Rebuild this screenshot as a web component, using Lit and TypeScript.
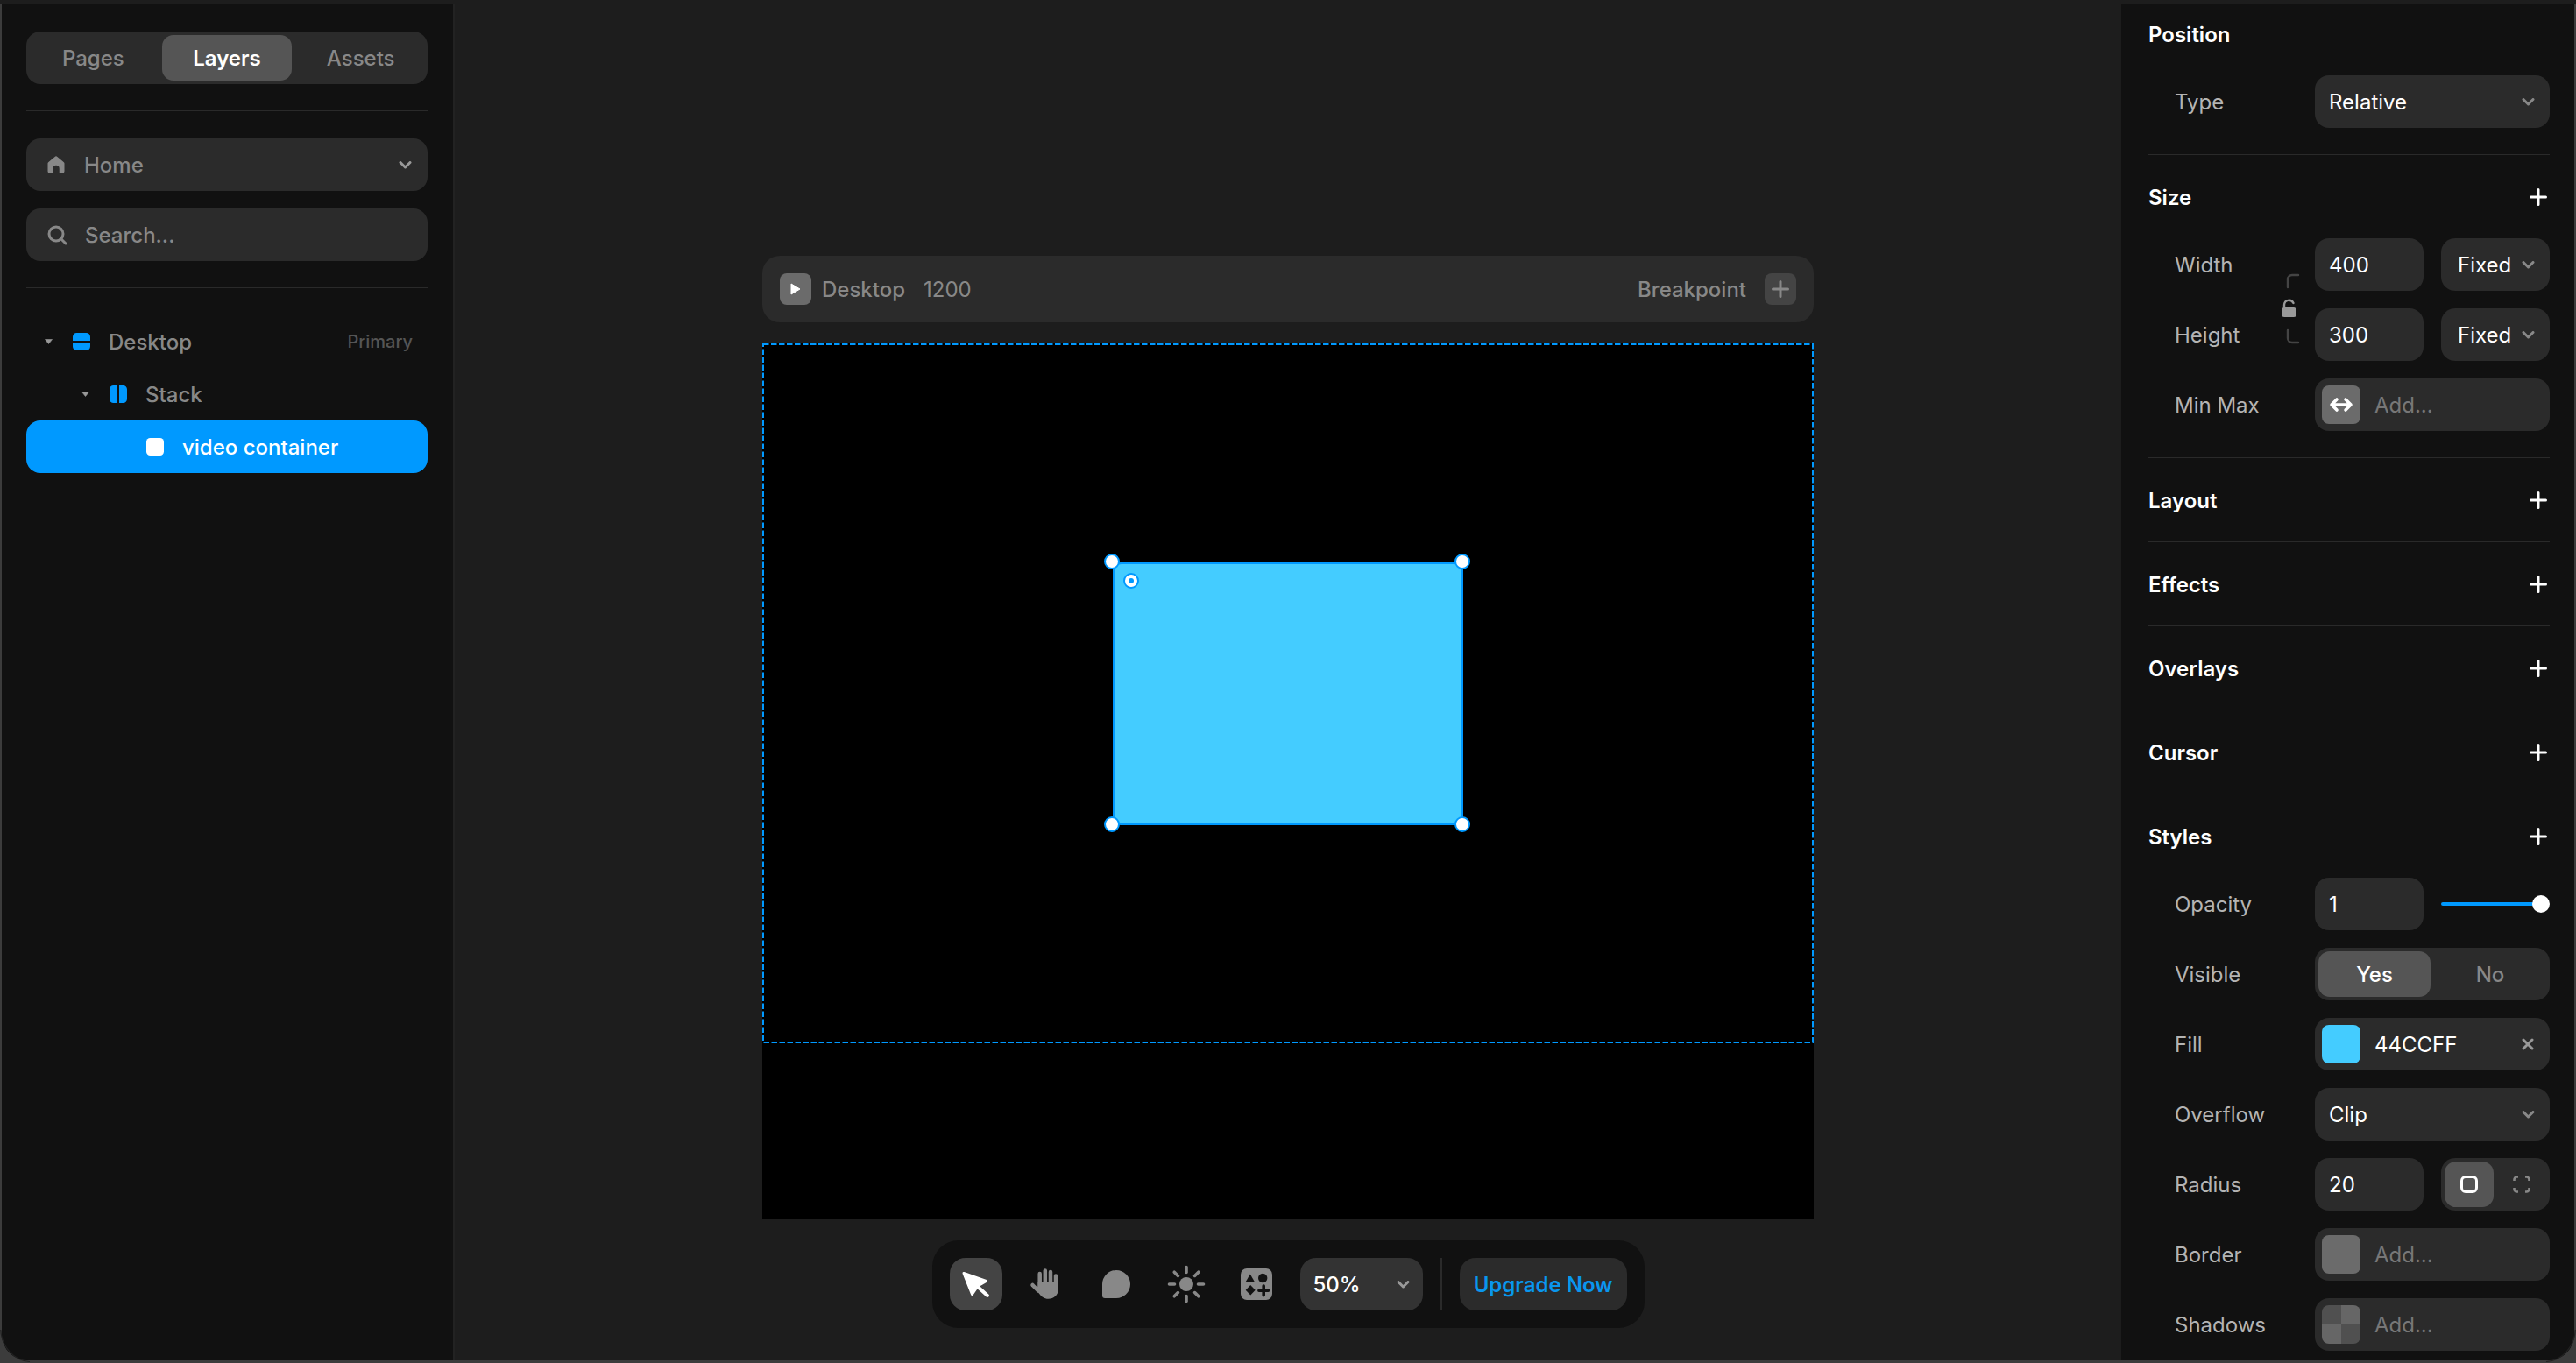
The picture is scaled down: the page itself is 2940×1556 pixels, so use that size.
import { LitElement, html, css, svg } from 'lit';
import { customElement } from 'lit/decorators.js';

const chevron = html`<svg class="chev" width="15" height="9" viewBox="0 0 15 9"><path d="M2 1.5 7.5 7 13 1.5" fill="none" stroke="currentColor" stroke-width="3" stroke-linecap="round" stroke-linejoin="round"/></svg>`;

const plus = html`<svg class="plus" width="20" height="20" viewBox="0 0 20 20"><path d="M10 1.5v17M1.5 10h17" stroke="currentColor" stroke-width="3" stroke-linecap="round"/></svg>`;

const caret = html`<svg class="caret" width="9" height="6" viewBox="0 0 9 6"><path d="M.5.5h8L4.5 5.5z" fill="#999" stroke="#999" stroke-width=".6" stroke-linejoin="round"/></svg>`;

const sunRays = [0, 45, 90, 135, 180, 225, 270, 315].map(
  (a) => svg`<line x1="30" y1="10.5" x2="30" y2="16.5" transform="rotate(${a} 30 30)"/>`
);

@customElement('left-panel')
class LeftPanel extends LitElement {
  static styles = css`
    :host {
      display: flex;
      flex-direction: column;
      flex: none;
      box-sizing: border-box;
      width: 517px;
      padding: 31px 29px 0 28px;
      border-right: 2px solid #222;
      background: #111;
    }
    .tabs {
      display: grid;
      grid-template-columns: repeat(3, 1fr);
      height: 60px;
      box-sizing: border-box;
      padding: 4px 0;
      border-radius: 16px;
      background: #2b2b2b;
      margin-bottom: 30px;
    }
    .tab {
      display: flex;
      align-items: center;
      justify-content: center;
      border-radius: 13px;
      color: #888;
      font-weight: 500;
    }
    .tab.on {
      margin: 0 2.500px;
      background: #555;
      color: #fff;
      font-weight: 600;
    }
    .line {
      height: 1px;
      background: #2a2a2a;
    }
    .field {
      display: flex;
      align-items: center;
      height: 60px;
      padding: 0 18px 0 24px;
      border-radius: 16px;
      background: #2b2b2b;
      color: #888;
      font-weight: 500;
      margin-top: 20px;
    }
    .field.home {
      margin-top: 31px;
    }
    .field svg:first-child {
      margin-right: 22px;
      flex: none;
    }
    .field .chev {
      margin-left: auto;
      color: #999;
    }
    .search {
      margin-bottom: 30px;
    }
    .tree {
      margin-top: 31px;
    }
    .node {
      display: flex;
      align-items: center;
      height: 60px;
      color: #888;
      font-weight: 500;
      padding-right: 17px;
      border-radius: 16px;
    }
    .caret {
      width: 9px;
      margin-right: 23px;
      flex: none;
    }
    .spacer {
      width: 32px;
      flex: none;
    }
    .kind {
      margin-right: 21px;
      flex: none;
    }
    .depth0 {
      padding-left: 21px;
    }
    .depth1 {
      padding-left: 63px;
    }
    .depth2 {
      padding-left: 105px;
    }
    .node.sel {
      background: #0099ff;
      color: #fff;
    }
    .tag {
      margin-left: auto;
      color: #555;
      font-size: 20px;
    }
  `;

  render() {
    return html`
      <div class="tabs">
        <div class="tab">Pages</div>
        <div class="tab on">Layers</div>
        <div class="tab">Assets</div>
      </div>
      <div class="line"></div>
      <div class="field home">
        <svg width="20" height="20" viewBox="0 0 20 20"><path d="M8.6.9a2.2 2.2 0 0 1 2.8 0l7.2 6a2.2 2.2 0 0 1 .9 1.7v9a2.2 2.2 0 0 1-2.2 2.2h-3.6v-5.300a3.700 3.700 0 0 0-7.400 0v5.300H2.700A2.200 2.200 0 0 1 .5 17.600v-9a2.200 2.200 0 0 1 .9-1.700z" fill="#888"/></svg>
        <span>Home</span>
        ${chevron}
      </div>
      <div class="field search">
        <svg width="23" height="23" viewBox="0 0 23 23" style="margin-right:20px"><circle cx="10" cy="10" r="8" fill="none" stroke="#888" stroke-width="3"/><path d="M16 16l5 5" stroke="#888" stroke-width="3" stroke-linecap="round"/></svg>
        <span>Search...</span>
      </div>
      <div class="line"></div>
      <div class="tree">
        <div class="node depth0">
          ${caret}
          <svg class="kind" width="20" height="20" viewBox="0 0 20 20"><path d="M0 4.500A4.500 4.500 0 0 1 4.500 0h11A4.500 4.500 0 0 1 20 4.500V9H0zM0 11h20v4.500a4.500 4.500 0 0 1-4.500 4.500h-11A4.500 4.500 0 0 1 0 15.500z" fill="#0099ff"/></svg>
          <span>Desktop</span>
          <span class="tag">Primary</span>
        </div>
        <div class="node depth1">
          ${caret}
          <svg class="kind" width="20" height="20" viewBox="0 0 20 20"><path d="M4.500 0H9v20H4.500A4.500 4.500 0 0 1 0 15.500v-11A4.500 4.500 0 0 1 4.500 0zM11 0h4.500A4.500 4.500 0 0 1 20 4.500v11a4.500 4.500 0 0 1-4.500 4.500H11z" fill="#0099ff"/></svg>
          <span>Stack</span>
        </div>
        <div class="node depth2 sel">
          <span class="spacer"></span>
          <svg class="kind" width="20" height="20" viewBox="0 0 20 20"><rect width="20" height="20" rx="4.500" fill="#fff"/></svg>
          <span>video container</span>
        </div>
      </div>
    `;
  }
}

@customElement('stage-view')
class StageView extends LitElement {
  static styles = css`
    :host {
      display: flex;
      flex-direction: column;
      align-items: center;
      flex: 1;
      min-width: 0;
      padding-top: 287px;
      background: #1d1d1d;
    }
    .bar {
      display: flex;
      align-items: center;
      box-sizing: border-box;
      width: 1200px;
      height: 76px;
      padding: 0 20px;
      border-radius: 20px;
      background: #2b2b2b;
      color: #888;
      font-weight: 500;
    }
    .play {
      display: flex;
      align-items: center;
      justify-content: center;
      width: 36px;
      height: 36px;
      border-radius: 8px;
      background: #6b6b6b;
      margin-right: 12px;
    }
    .size {
      margin-left: 21px;
      font-weight: 400;
    }
    .bp {
      margin-left: auto;
      margin-right: 21px;
    }
    .add {
      display: flex;
      align-items: center;
      justify-content: center;
      width: 36px;
      height: 36px;
      border-radius: 8px;
      background: #444;
      color: #888;
    }
    .board {
      width: 1200px;
      height: 1000px;
      margin-top: 24px;
      background: #000;
    }
    .frame {
      position: relative;
      display: flex;
      align-items: center;
      justify-content: center;
      height: 799px;
    }
    .dash {
      position: absolute;
      inset: 0;
    }
    .box {
      position: relative;
      width: 400px;
      height: 300px;
      border-radius: 10px;
      background: #44ccff;
      box-shadow: inset 0 0 0 2px #0099ff;
    }
    .grip {
      position: absolute;
      width: 18px;
      height: 18px;
      box-sizing: border-box;
      border: 2px solid #0099ff;
      border-radius: 50%;
      background: #fff;
    }
    .tl {
      left: -10px;
      top: -10px;
    }
    .tr {
      right: -8px;
      top: -10px;
    }
    .bl {
      left: -10px;
      bottom: -8px;
    }
    .br {
      right: -8px;
      bottom: -8px;
    }
    .radius {
      left: 12px;
      top: 12px;
    }
    .radius::after {
      content: '';
      position: absolute;
      left: 4px;
      top: 4px;
      width: 6px;
      height: 6px;
      border-radius: 50%;
      background: #0099ff;
    }
    .tools {
      display: flex;
      align-items: center;
      gap: 20px;
      height: 100px;
      box-sizing: border-box;
      padding: 0 20px;
      margin-top: 24px;
      border-radius: 30px;
      background: #111;
    }
    .tool {
      display: block;
      width: 60px;
      height: 60px;
      border-radius: 18px;
    }
    .tool.on {
      background: #444;
    }
    .zoom {
      display: flex;
      align-items: center;
      justify-content: space-between;
      width: 140px;
      height: 60px;
      box-sizing: border-box;
      padding: 0 15px;
      border-radius: 18px;
      background: #333;
      color: #fff;
      font-weight: 500;
    }
    .zoom .chev {
      color: #999;
    }
    .sep {
      width: 2px;
      height: 60px;
      background: #2a2a2a;
    }
    .upgrade {
      display: flex;
      align-items: center;
      justify-content: center;
      width: 191px;
      height: 60px;
      border-radius: 18px;
      background: #2b2b2b;
      color: #0a96ee;
      font-weight: 600;
    }
  `;

  render() {
    return html`
      <div class="bar">
        <div class="play">
          <svg width="12" height="14" viewBox="0 0 12 14"><path d="M1 1l10 6-10 6z" fill="#fff" stroke="#fff" stroke-width="1" stroke-linejoin="round"/></svg>
        </div>
        <span>Desktop</span>
        <span class="size">1200</span>
        <span class="bp">Breakpoint</span>
        <div class="add">${plus}</div>
      </div>
      <div class="board">
        <div class="frame">
          <div class="box">
            <div class="grip tl"></div>
            <div class="grip tr"></div>
            <div class="grip bl"></div>
            <div class="grip br"></div>
            <div class="grip radius"></div>
          </div>
          <svg class="dash" width="1200" height="799"><rect x="1" y="1" width="1198" height="797" fill="none" stroke="#0099ff" stroke-width="2" stroke-dasharray="6.500 2.500"/></svg>
        </div>
      </div>
      <div class="tools">
        <svg class="tool on" viewBox="0 0 60 60">
          <path d="M16 17.500 41.500 26.500 32 32 25.500 41.500z" fill="#fff" stroke="#fff" stroke-width="3" stroke-linejoin="round"/>
          <path d="M32 33 43 43" stroke="#fff" stroke-width="4" stroke-linecap="round"/>
        </svg>
        <svg class="tool" viewBox="0 0 60 60">
          <g transform="translate(-1 0)">
            <g stroke="#888" stroke-width="4.500" stroke-linecap="round" fill="none">
              <path d="M23.700 18v14M29.800 14.500v16M36 16v15M42 20.500v12"/>
              <path d="M15.500 31 22 37.500"/>
            </g>
            <path d="M21.500 28h23.200v8.500c0 6-5 10.200-11.200 10.200-5 0-7.800-2.500-10.500-6l-5-6.200 3.500-2z" fill="#888"/>
          </g>
        </svg>
        <svg class="tool" viewBox="0 0 60 60"><path d="M30 14a16 16 0 0 1 0 32H17a3 3 0 0 1-3-3V30a16 16 0 0 1 16-16z" fill="#888"/></svg>
        <svg class="tool" viewBox="0 0 60 60">
          <circle cx="30" cy="30" r="8" fill="#888"/>
          <g stroke="#888" stroke-width="3.600" stroke-linecap="round">${sunRays}</g>
        </svg>
        <svg class="tool" viewBox="0 0 60 60">
          <rect x="12" y="12" width="36" height="36" rx="7" fill="#888"/>
          <path d="M22.800 18.500 28.300 28H17.300z" fill="#111"/>
          <circle cx="37.200" cy="23" r="5.200" fill="#111"/>
          <path d="M23.200 31l5.500 5.700-5.500 5.700-5.500-5.700z" fill="#111"/>
          <path d="M38.200 32v10.600M32.900 37.300H43.500" stroke="#111" stroke-width="3.600" stroke-linecap="round"/>
        </svg>
        <div class="zoom"><span>50%</span>${chevron}</div>
        <div class="sep"></div>
        <div class="upgrade">Upgrade Now</div>
      </div>
    `;
  }
}

@customElement('props-panel')
class PropsPanel extends LitElement {
  static styles = css`
    :host {
      display: block;
      flex: none;
      box-sizing: border-box;
      width: 517px;
      padding: 0 28px 0 31px;
      background: #111;
      overflow: hidden;
    }
    section {
      padding: 33px 0 32px;
      border-bottom: 1px solid #2a2a2a;
    }
    section.open {
      padding-bottom: 30px;
    }
    section:first-child {
      padding-top: 19px;
    }
    section:last-child {
      border-bottom: 0;
    }
    .head {
      display: flex;
      align-items: center;
      justify-content: space-between;
      height: 30px;
      color: #fff;
      font-weight: 600;
    }
    .plus {
      margin-right: 3px;
    }
    .rows {
      position: relative;
      display: flex;
      flex-direction: column;
      gap: 20px;
      margin-top: 32px;
      padding-left: 30px;
    }
    .row {
      display: flex;
      align-items: center;
      height: 60px;
    }
    .label {
      width: 160px;
      flex: none;
      color: #b4b4b4;
    }
    .control {
      flex: 1;
      display: flex;
      gap: 20px;
      height: 60px;
    }
    .input {
      flex: 1;
      display: flex;
      align-items: center;
      min-width: 0;
      box-sizing: border-box;
      padding: 0 17px 0 16px;
      border-radius: 16px;
      background: #2b2b2b;
      color: #fff;
    }
    .half {
      flex: 0 0 124px;
    }
    .input .chev {
      margin-left: auto;
      color: #888;
    }
    .input.unit {
      padding: 0 17px 0 19px;
    }
    .input.swatched {
      padding-left: 8px;
    }
    .swatch {
      width: 44px;
      height: 44px;
      flex: none;
      border-radius: 8px;
      margin-right: 16px;
      background: #6b6b6b;
    }
    .swatch.fill {
      background: #44ccff;
    }
    .swatch.shadow {
      background: conic-gradient(#666 0 25%, #505050 0 50%, #666 0 75%, #505050 0);
    }
    .swatch.minmax {
      display: flex;
      align-items: center;
      justify-content: center;
    }
    .hint {
      color: #777;
    }
    .clear {
      margin-left: auto;
    }
    .slider {
      position: relative;
      display: flex;
      align-items: center;
    }
    .track {
      flex: 1;
      height: 4px;
      border-radius: 2px;
      background: #0099ff;
    }
    .knob {
      width: 20px;
      height: 20px;
      margin-left: -4px;
      border-radius: 50%;
      background: #fff;
    }
    .seg {
      display: flex;
      box-sizing: border-box;
      padding: 4px 0 4px 4px;
      border-radius: 16px;
      background: #2b2b2b;
      color: #888;
      font-weight: 500;
    }
    .seg.full {
      flex: 1;
    }
    .opt {
      flex: 1;
      display: flex;
      align-items: center;
      justify-content: center;
      border-radius: 13px;
    }
    .opt.on {
      background: #555;
      color: #fff;
    }
    .opt.wide {
      flex: 0 0 128px;
    }
    .opt.tight {
      flex: 0 0 56px;
    }
    .lock {
      position: absolute;
      left: 152px;
      top: 40px;
    }
  `;

  private row(label: string, control: unknown) {
    return html`<div class="row"><div class="label">${label}</div><div class="control">${control}</div></div>`;
  }

  private select(value: string) {
    return html`<div class="input"><span>${value}</span>${chevron}</div>`;
  }

  private add(kind: string, icon: unknown = '') {
    return html`<div class="input swatched"><div class="swatch ${kind}">${icon}</div><span class="hint">Add...</span></div>`;
  }

  private title(name: string) {
    return html`<div class="head"><span>${name}</span>${plus}</div>`;
  }

  render() {
    return html`
      <section class="open">
        <div class="head"><span>Position</span></div>
        <div class="rows">${this.row('Type', this.select('Relative'))}</div>
      </section>
      <section class="open">
        ${this.title('Size')}
        <div class="rows">
          ${this.row('Width', html`<div class="input half">400</div><div class="input half unit"><span>Fixed</span>${chevron}</div>`)}
          ${this.row('Height', html`<div class="input half">300</div><div class="input half unit"><span>Fixed</span>${chevron}</div>`)}
          ${this.row('Min Max', this.add('minmax', html`<svg width="28" height="18" viewBox="0 0 28 18"><path d="M3 9h22M9 3 3 9l6 6M19 3l6 6-6 6" fill="none" stroke="#fff" stroke-width="3.600" stroke-linecap="round" stroke-linejoin="round"/></svg>`))}
          <svg class="lock" width="22" height="82" viewBox="0 0 22 82">
            <path d="M7 16V7a5 5 0 0 1 5-5h7M7 65v9a5 5 0 0 0 5 5h7" fill="none" stroke="#444" stroke-width="2.400" stroke-linecap="round"/>
            <rect x=".5" y="39" width="16" height="11" rx="2.500" fill="#999"/>
            <path d="M3 41v-5a5.500 5.500 0 0 1 10.500-2" fill="none" stroke="#999" stroke-width="2.400" stroke-linecap="round"/>
          </svg>
        </div>
      </section>
      <section>${this.title('Layout')}</section>
      <section>${this.title('Effects')}</section>
      <section>${this.title('Overlays')}</section>
      <section>${this.title('Cursor')}</section>
      <section class="open">
        ${this.title('Styles')}
        <div class="rows">
          ${this.row('Opacity', html`<div class="input half">1</div><div class="slider half"><div class="track"></div><div class="knob"></div></div>`)}
          ${this.row('Visible', html`<div class="seg full"><div class="opt on wide">Yes</div><div class="opt">No</div></div>`)}
          ${this.row('Fill', html`<div class="input swatched"><div class="swatch fill"></div><span>44CCFF</span><svg class="clear" width="14" height="14" viewBox="0 0 14 14" style="margin-right:1px"><path d="M2 2l10 10M12 2 2 12" stroke="#999" stroke-width="3" stroke-linecap="round"/></svg></div>`)}
          ${this.row('Overflow', this.select('Clip'))}
          ${this.row('Radius', html`<div class="input half">20</div><div class="seg half">
            <div class="opt on tight"><svg width="20" height="20" viewBox="0 0 20 20"><rect x="1.500" y="1.500" width="17" height="17" rx="4.500" fill="none" stroke="#fff" stroke-width="3"/></svg></div>
            <div class="opt"><svg width="20" height="20" viewBox="0 0 20 20"><path d="M1.500 6V4.500a3 3 0 0 1 3-3H6M14 1.500h1.500a3 3 0 0 1 3 3V6M18.500 14v1.500a3 3 0 0 1-3 3H14M6 18.500H4.500a3 3 0 0 1-3-3V14" fill="none" stroke="#888" stroke-width="2.600"/></svg></div>
          </div>`)}
          ${this.row('Border', this.add(''))}
          ${this.row('Shadows', this.add('shadow'))}
        </div>
      </section>
    `;
  }
}

@customElement('app-root')
class AppRoot extends LitElement {
  static styles = css`
    :host {
      position: relative;
      display: block;
      width: 2940px;
      height: 1556px;
      overflow: hidden;
      box-sizing: border-box;
      padding: 4px 2px 3px;
      background: linear-gradient(#1d1d1d 4px, #3c3c3c 4px);
      font-family: Inter, 'Noto Sans', sans-serif;
      font-size: 24px;
    }
    .shell {
      display: flex;
      box-sizing: border-box;
      height: 100%;
      border-top: 1px solid #2e2e2e;
      border-radius: 0 0 30px 30px;
      background: #111;
      overflow: hidden;
    }
    .arc {
      position: absolute;
      bottom: 0;
    }
    .arc.left {
      left: 0;
    }
    .arc.right {
      right: 0;
      transform: scaleX(-1);
    }
  `;

  private arc(side: string) {
    return html`<svg class="arc ${side}" width="40" height="40" viewBox="0 0 40 40"><path d="M.8 2C1.500 20 15 37.500 34 38.500" fill="none" stroke="#222" stroke-width="1.200"/></svg>`;
  }

  render() {
    return html`
      <div class="shell">
        <left-panel></left-panel>
        <stage-view></stage-view>
        <props-panel></props-panel>
      </div>
      ${this.arc('left')}${this.arc('right')}
    `;
  }
}
